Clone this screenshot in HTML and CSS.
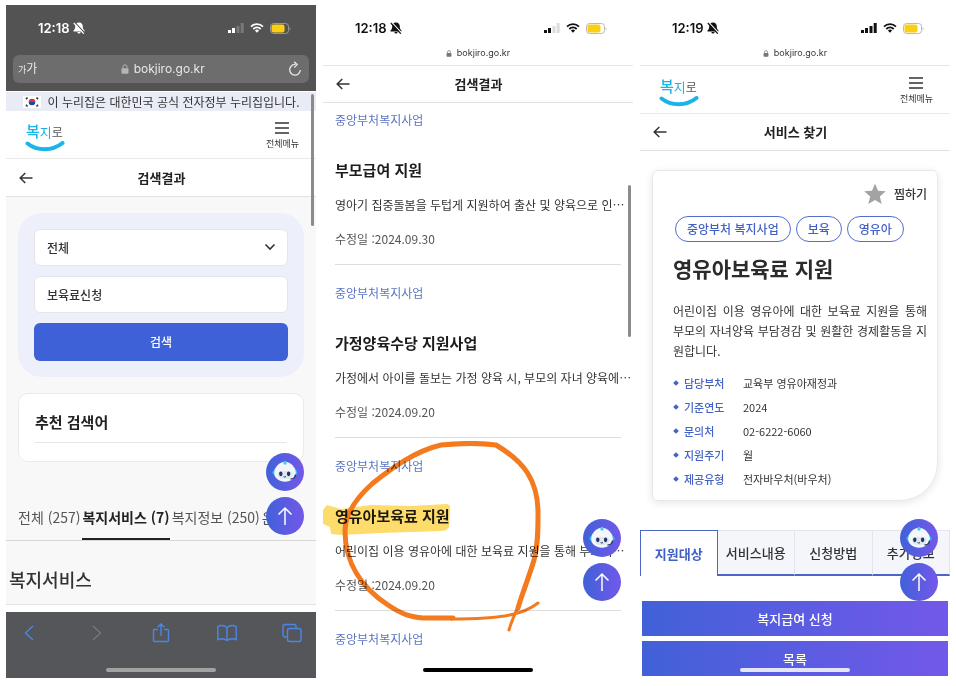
FILE: index.html
```html
<!DOCTYPE html>
<html lang="ko">
<head>
<meta charset="utf-8">
<meta name="viewport" content="width=device-width, initial-scale=1">
<title>복지로 서비스 안내</title>
<link rel="stylesheet" href="styles.css">
</head>
<body>
<svg class="sprite" aria-hidden="true">
  <symbol id="bell" viewBox="0 0 12 12"><path d="M6 .5C3.400.5 2.200 2.300 2.200 4.400c0 2.300-.7 3-1.700 4.200v.8h11v-.8c-1-1.200-1.700-1.900-1.700-4.200C9.800 2.300 8.600.5 6 .5zM4.400 10a1.600 1.600 0 0 0 3.200 0z" fill="currentColor"/><path d="M2 .6 11.600 11" stroke="var(--bar)" stroke-width="1.200"/><path d="M.8 1 10.800 11.700" stroke="currentColor" stroke-width="1.200"/></symbol>
  <symbol id="wifi" viewBox="0 0 14 10"><path d="M1 3.600a8.600 8.600 0 0 1 12 0M3.300 6a5.300 5.300 0 0 1 7.400 0" fill="none" stroke="currentColor" stroke-width="1.800"/><path d="M7 9.800 4.900 7.600a3 3 0 0 1 4.200 0z" fill="currentColor"/></symbol>
  <symbol id="battery" viewBox="0 0 21 11"><rect x=".5" y=".5" width="18" height="10" rx="3" fill="none" stroke="#a9a9a9" stroke-opacity=".8"/><rect x="1.500" y="1.500" width="13" height="8" rx="2" fill="#fccf12"/><path d="M19.700 4v3.500c1-.4 1-3 0-3.500z" fill="#a9a9a9"/></symbol>
  <symbol id="lock" viewBox="0 0 8 10"><rect x=".5" y="4.200" width="7" height="5.500" rx="1" fill="currentColor"/><path d="M2 4.500V2.800a2 2 0 0 1 4 0v1.700" fill="none" stroke="currentColor"/></symbol>
  <symbol id="back" viewBox="0 0 14 12"><path d="M6.300 1 1.200 6l5.100 5M1.500 6H13.500" fill="none" stroke="currentColor" stroke-width="1.500"/></symbol>
  <symbol id="menu" viewBox="0 0 16 12"><path d="M1 1h14M1 6h14M1 11h14" stroke="currentColor" stroke-width="1.300"/></symbol>
  <symbol id="smile" viewBox="0 0 40 11"><path d="M2.500 2.500C12 10 27 10.500 37.500 2" fill="none" stroke="#19b4e9" stroke-width="4" stroke-linecap="round"/></symbol>
  <symbol id="up" viewBox="0 0 38 38"><path d="M19 28V11M12.500 17.500 19 11l6.500 6.500" fill="none" stroke="#fff" stroke-width="1.500"/></symbol>
  <symbol id="bot" viewBox="0 0 38 38"><path d="M10 14 6 19.500 10 25M28 14l4 5.500L28 25" fill="#27b9ee"/><path d="M16 11l3-3.500 3 3.500z" fill="#32c5f2"/><path d="M19 8.800c5.500 0 10.800 5.500 10.800 11.200 0 5-5 8.700-10.800 8.700S8.200 25 8.200 20C8.200 14.300 13.500 8.800 19 8.800z" fill="#f3f7fc"/><circle cx="19" cy="10" r="1.700" fill="#43cdf3"/><path d="M12 20c1-3 13-3 14.500 0 .5 4-2 6-7.300 6S11.500 24 12 20z" fill="#dfe8f2"/><ellipse cx="14.800" cy="20.800" rx="1.700" ry="2.400" fill="#27355c"/><ellipse cx="22.600" cy="20.800" rx="1.700" ry="2.400" fill="#27355c"/><path d="M17.600 23.500q1.200 1.200 2.400 0" fill="none" stroke="#27355c"/><path d="M29.500 21.500q-.5 4.500-5 4.500" fill="none" stroke="#27355c" stroke-width="1.400"/></symbol>
</svg>

<main class="board">
  <section class="phone search" aria-label="검색 화면">
    <header class="chrome">
      <div class="status">
        <span class="time">12:18 <svg class="bell"><use href="#bell"/></svg></span>
        <span class="signals">
          <svg class="bars" viewBox="0 0 16 10"><path d="M0 7h3v3H0zM4 5h3v5H4z" fill="currentColor"/><path d="M8.500 3h3v7h-3zM12.700 0h3v10h-3z" fill="currentColor" opacity=".22"/></svg>
          <svg class="wifi"><use href="#wifi"/></svg><svg class="battery"><use href="#battery"/></svg>
        </span>
      </div>
      <div class="address">
        <span class="zoomer"><small>가</small>가</span>
        <span class="host"><svg><use href="#lock"/></svg>bokjiro.go.kr</span>
        <button class="reload" aria-label="새로고침"><svg viewBox="0 0 14 16"><path d="M7.500 3.500A5.300 5.300 0 1 0 12.300 9M6.200.8 9.200 3.600 6.200 6.600" fill="none" stroke="currentColor" stroke-width="1.300"/></svg></button>
      </div>
    </header>
    <p class="official"><svg viewBox="0 0 18 12"><path d="M0 0h18v12H0z" fill="#fff"/><path d="M5.700 6a3.300 3.300 0 0 1 6.600 0z" fill="#d8323f"/><path d="M5.700 6a3.300 3.300 0 0 0 6.600 0z" fill="#1b4a9c"/><path d="m3 3.300 1.500-1.800M3 8.700l1.500 1.800M15 3.300l-1.500-1.800M15 8.700l-1.500 1.800" stroke="#333" stroke-width="1.600"/></svg>이 누리집은 대한민국 공식 전자정부 누리집입니다.</p>
    <div class="brandbar">
      <a class="logo" href="#"><span><b>복</b>지<i>로</i></span><svg><use href="#smile"/></svg></a>
      <button class="menu"><svg><use href="#menu"/></svg>전체메뉴</button>
    </div>
    <div class="titlebar"><button aria-label="뒤로"><svg><use href="#back"/></svg></button><h1>검색결과</h1></div>
    <div class="results">
      <form class="query">
        <div class="field"><select aria-label="분류"><option>전체</option></select><svg viewBox="0 0 12 8"><path d="m1.500 1.500 4.500 4.500 4.500-4.500" fill="none" stroke="currentColor" stroke-width="1.600"/></svg></div>
        <div class="field"><input type="text" aria-label="검색어" value="보육료신청"></div>
        <button type="button">검색</button>
      </form>
      <section class="suggest"><h2>추천 검색어</h2></section>
      <nav class="counts"><a href="#">전체 (257)</a><a href="#" class="on">복지서비스 (7)</a><a href="#">복지정보 (250)</a><a href="#">온라인</a></nav>
      <h2 class="group">복지서비스</h2>
    </div>
    <footer class="toolbar">
      <div class="tools">
        <button aria-label="이전"><svg viewBox="0 0 20 20"><path d="M13 3 5.500 10 13 17" /></svg></button>
        <button aria-label="다음" disabled><svg viewBox="0 0 20 20"><path d="m7 3 7.500 7L7 17"/></svg></button>
        <button aria-label="공유"><svg viewBox="0 0 20 20"><path d="M7 6.500H3.200q-.7 0-.7.7v10.600q0 .7.700.7h13.600q.7 0 .7-.7V7.200q0-.7-.7-.7H13M10 13V1.200M6.600 4.300 10 1l3.400 3.300"/></svg></button>
        <button aria-label="책갈피"><svg viewBox="0 0 20 20"><path d="M10 4.500Q5.500 1 .8 3.500v13.200Q6 14.500 10 17.500q4-3 9.200-.8V3.500Q14.500 1 10 4.500zv13"/></svg></button>
        <button aria-label="탭"><svg viewBox="0 0 20 20"><rect x="5.500" y="5.500" width="13.500" height="13" rx="2"/><path d="M5.500 14H3q-2 0-2-2V3.500q0-2 2-2h9q2 0 2 2v2"/></svg></button>
      </div>
      <span class="home"></span>
    </footer>
    <span class="thumb"></span>
    <div class="floating"><button aria-label="챗봇"><svg><use href="#bot"/></svg></button><button aria-label="맨 위로"><svg><use href="#up"/></svg></button></div>
  </section>

  <section class="phone list" aria-label="검색결과 화면">
    <header class="chrome light">
      <div class="status">
        <span class="time">12:18 <svg class="bell"><use href="#bell"/></svg></span>
        <span class="signals">
          <svg class="bars" viewBox="0 0 16 10"><path d="M0 7h3v3H0zM4 5h3v5H4z" fill="currentColor"/><path d="M8.500 3h3v7h-3zM12.700 0h3v10h-3z" fill="currentColor" opacity=".15"/></svg>
          <svg class="wifi"><use href="#wifi"/></svg><svg class="battery"><use href="#battery"/></svg>
        </span>
      </div>
      <p class="host"><svg><use href="#lock"/></svg>bokjiro.go.kr</p>
    </header>
    <div class="titlebar"><button aria-label="뒤로"><svg><use href="#back"/></svg></button><h1>검색결과</h1></div>
    <ul class="items">
      <li><p class="kind">중앙부처복지사업</p><h2>부모급여 지원</h2><p>영아기 집중돌봄을 두텁게 지원하여 출산 및 양육으로 인⋯</p><p class="date">수정일 :2024.09.30</p></li>
      <li><p class="kind">중앙부처복지사업</p><h2>가정양육수당 지원사업</h2><p>가정에서 아이를 돌보는 가정 양육 시, 부모의 자녀 양육에⋯</p><p class="date">수정일 :2024.09.20</p></li>
      <li><p class="kind">중앙부처복지사업</p><h2>영유아보육료 지원</h2><p>어린이집 이용 영유아에 대한 보육료 지원을 통해 부모의⋯</p><p class="date">수정일 :2024.09.20</p></li>
      <li><p class="kind">중앙부처복지사업</p></li>
    </ul>
    <svg class="marks" viewBox="0 0 310 673" aria-hidden="true">
      <path class="marker" d="M0 505 4 500l14 4 30-4 40 1 36-2q4 1 3 6l-1 17q-2 4-8 4l-60 2-40 2-10-1-1-7-7-3z"/>
      <path class="pen" d="M195 603C200 586 207 569 211 555C215 540 215 526 215 511C216 475 200 456 173 440C158 438 138 438 118 440C92 446 69 463 50 478C32 494 22 509 22 526C22 558 39 583 65 600C80 610 88 612 100 613L130 613"/>
      <path class="pen fine" d="M208 566C201 592 190 610 186 625M128 614C185 614 202 608 215 598"/>
    </svg>
    <span class="home"></span>
    <span class="thumb"></span>
    <div class="floating"><button aria-label="챗봇"><svg><use href="#bot"/></svg></button><button aria-label="맨 위로"><svg><use href="#up"/></svg></button></div>
  </section>

  <section class="phone detail" aria-label="서비스 상세 화면">
    <header class="chrome light">
      <div class="status">
        <span class="time">12:19 <svg class="bell"><use href="#bell"/></svg></span>
        <span class="signals">
          <svg class="bars" viewBox="0 0 16 10"><path d="M0 7h3v3H0zM4 5h3v5H4zM8.500 3h3v7h-3zM12.700 0h3v10h-3z" fill="currentColor"/></svg>
          <svg class="wifi"><use href="#wifi"/></svg><svg class="battery"><use href="#battery"/></svg>
        </span>
      </div>
      <p class="host"><svg><use href="#lock"/></svg>bokjiro.go.kr</p>
    </header>
    <div class="brandbar">
      <a class="logo" href="#"><span><b>복</b>지<i>로</i></span><svg><use href="#smile"/></svg></a>
      <button class="menu"><svg><use href="#menu"/></svg>전체메뉴</button>
    </div>
    <div class="titlebar"><button aria-label="뒤로"><svg><use href="#back"/></svg></button><h1>서비스 찾기</h1></div>
    <article class="card">
      <button class="save"><svg viewBox="0 0 22 22"><path d="m11 .5 3 7.200 7.800.6-6 5.100 1.900 7.600L11 17l-6.700 4 1.900-7.600-6-5.100 7.800-.6z" fill="#a3a3a3"/></svg>찜하기</button>
      <p class="tags"><span>중앙부처 복지사업</span><span>보육</span><span>영유아</span></p>
      <h2>영유아보육료 지원</h2>
      <p class="summary">어린이집 이용 영유아에 대한 보육료 지원을 통해 부모의 자녀양육 부담경감 및 원활한 경제활동을 지원합니다.</p>
      <dl>
        <dt>담당부처</dt><dd>교육부 영유아재정과</dd>
        <dt>기준연도</dt><dd>2024</dd>
        <dt>문의처</dt><dd>02-6222-6060</dd>
        <dt>지원주기</dt><dd>월</dd>
        <dt>제공유형</dt><dd>전자바우처(바우처)</dd>
      </dl>
    </article>
    <nav class="tabs"><button class="on">지원대상</button><button>서비스내용</button><button>신청방법</button><button>추가정보</button></nav>
    <div class="actions"><button>복지급여 신청</button><button>목록</button></div>
    <span class="home"></span>
    <div class="floating"><button aria-label="챗봇"><svg><use href="#bot"/></svg></button><button aria-label="맨 위로"><svg><use href="#up"/></svg></button></div>
  </section>
</main>
</body>
</html>
```
FILE: styles.css
```css
* { box-sizing: border-box; margin: 0; padding: 0; }
body { background: #fff; color: #333; font: 12px/20px "Noto Sans CJK KR", sans-serif; }
button, input, select { font: inherit; color: inherit; border: 0; background: none; }
a { color: inherit; text-decoration: none; }
svg { display: block; flex: none; }
.sprite { position: absolute; width: 0; height: 0; }

.board { display: grid; grid-template-columns: repeat(3, 1fr); gap: 7px; min-height: 100vh; padding: 5px 6px 8px; }
.phone { position: relative; display: flex; flex-direction: column; min-width: 0; --bar: #fff; }

/* Status bar and address */
.chrome { font-family: Inter, "Noto Sans CJK KR", sans-serif; }
.search .chrome { --bar: #535353; background: #535353; color: #fff; padding: 0 7px 8px; margin-bottom: 1px; }
.status { display: flex; justify-content: space-between; align-items: center; height: 50px; padding: 0 18px 4px 25px; }
.light .status { height: 41px; padding: 5px 26px 0 32px; color: #111; }
.time { display: flex; align-items: center; gap: 3px; font-size: 13px; font-weight: 600; }
.bell { width: 12px; height: 12px; }
.signals { display: flex; align-items: center; gap: 6px; }
.bars { width: 16px; height: 10px; }
.wifi { width: 14px; height: 10px; }
.battery { width: 21px; height: 11px; }
.address { display: flex; justify-content: space-between; align-items: center; height: 28px; padding: 0 7px 0 5px; border-radius: 6px; background: #6d6d6d; color: #e8e8e8; }
.zoomer { font-size: 12px; }
.zoomer small { font-size: 9px; }
.host { display: flex; align-items: center; justify-content: center; gap: 5px; }
.address .host { font-size: 12px; }
.address .host svg { width: 8px; height: 10px; color: #b5b5b5; }
.light .host { height: 14px; font-size: 9px; color: #333; }
.light .host svg { width: 6px; height: 7px; color: #777; }
.light { border-bottom: 1px solid #e5e5e5; height: 61px; }
.reload svg { width: 14px; height: 16px; }

.official { display: flex; align-items: center; justify-content: center; gap: 7px; height: 19px; background: #e9ecf5; }
.official svg { width: 18px; height: 12px; }
.brandbar { display: flex; justify-content: space-between; align-items: center; height: 48px; padding: 3px 17px 0 19px; border-bottom: 1px solid #e9e9e9; }
.logo { display: block; color: #19b4e9; }
.logo span { display: block; height: 20px; padding-left: 1px; font-size: 13px; }
.logo b { font-size: 15px; font-weight: 500; }
.logo i { font-style: normal; color: #555; font-size: 12px; }
.logo svg { width: 40px; height: 11px; }
.menu { display: grid; justify-items: center; gap: 3px; font-size: 9px; line-height: 14px; }
.menu svg { width: 16px; height: 12px; }
.titlebar { display: grid; grid-template-columns: 14px 1fr 14px; align-items: center; height: 38px; padding: 0 12px 0 13px; border-bottom: 1px solid #e2e2e2; }
.titlebar svg { width: 14px; height: 12px; }
.titlebar h1 { font-size: 13px; font-weight: 700; text-align: center; color: #222; }
.list .titlebar, .detail .titlebar { height: 37px; }

/* Search screen */
.results { flex: 1; margin-bottom: 7px; padding: 16px 0 0; border-bottom: 1px solid #e2e2e2; background: #f8f8f8; overflow: hidden; }
.query { display: grid; gap: 10px; margin: 0 12px; padding: 16px; border-radius: 24px; background: #edf0fb; }
.field { position: relative; }
.field select, .field input { display: block; width: 100%; height: 37px; padding: 0 12px; border: 1px solid #e5e6ec; border-radius: 6px; background: #fff; appearance: none; font-weight: 500; }
.field svg { position: absolute; right: 12px; top: 14px; width: 12px; height: 8px; }
.query button { height: 38px; border-radius: 6px; background: #3f61d7; color: #fff; font-weight: 500; }
.suggest { margin: 16px 12px 0; padding: 14px 16px 18px; border: 1px solid #ebebeb; border-radius: 10px; background: #fff; }
.suggest h2 { padding-bottom: 6px; border-bottom: 1px solid #e6e6e6; font-size: 15px; line-height: 28px; font-weight: 700; color: #222; }
.counts { display: flex; gap: 2px; margin-top: 34px; padding-left: 12px; border-bottom: 1px solid #d8d8d8; font-size: 14px; line-height: 42px; white-space: nowrap; overflow: hidden; color: #555; }
.counts .on { border-bottom: 2px solid #222; font-weight: 700; color: #222; }
.group { padding: 25px 3px 12px; font-size: 18px; line-height: 26px; font-weight: 500; }
.toolbar { height: 66px; padding-top: 11px; background: #55565a; }
.tools { display: flex; justify-content: space-between; padding: 0 14px; }
.tools svg { width: 20px; height: 20px; fill: none; stroke: #4a86e8; stroke-width: 1.4; }
.tools :disabled svg { stroke: #77787b; }
.home { position: absolute; left: 50%; bottom: 6px; width: 110px; height: 4px; margin-left: -55px; border-radius: 2px; background: #000; }
.search .home { background: #a2a2a2; }
.detail .home { background: #e4e4fa; }
.thumb { position: absolute; right: 2px; width: 3px; border-radius: 2px; background: #8b8b8b; }
.search .thumb { top: 89px; height: 132px; }
.list .thumb { top: 180px; height: 152px; }
.floating { position: absolute; right: 12px; bottom: 77px; display: grid; gap: 6px; }
.search .floating { bottom: 143px; }
.floating button { width: 38px; height: 38px; border-radius: 50%; background: linear-gradient(90deg, #4161d8, #7358ea); }
.floating svg { width: 38px; height: 38px; }

/* Result list */
.items { flex: 1; padding: 0 12px; list-style: none; }
.items li { padding: 18px 0 15px; border-bottom: 1px solid #dedede; }
.items li:first-child { padding-top: 7px; }
.items li:last-child { border: 0; }
.items p { white-space: nowrap; }
.items .kind { color: #5a74c4; }
.items h2 { margin: 27px 0 12px; font-size: 15px; line-height: 26px; font-weight: 700; color: #1c1c1c; }
.items .date { margin-top: 14px; color: #555; }
.marks { position: absolute; left: 0; top: 0; width: 310px; height: 673px; pointer-events: none; mix-blend-mode: multiply; }
.marker { fill: #fddc6c; }
.pen { fill: none; stroke: #f47a20; stroke-width: 5; stroke-linecap: round; stroke-linejoin: round; }
.fine { stroke-width: 3; }

/* Service detail */
.card { margin: 19px 12px 0; padding: 12px 10px 9px 20px; border: 1px solid #e8e8e8; border-radius: 6px 6px 38px 6px; box-shadow: 0 2px 8px rgba(0, 0, 0, .1); }
.save { display: flex; align-items: center; gap: 8px; margin-left: auto; font-weight: 500; }
.save svg { width: 22px; height: 22px; }
.tags { display: flex; gap: 5px; margin-top: 11px; padding-left: 2px; }
.tags span { padding: 0 11px; border: 1px solid #526fce; border-radius: 13px; line-height: 24px; font-weight: 500; color: #4261c4; }
.card h2 { margin: 10px 0 17px; font-size: 21px; line-height: 32px; font-weight: 700; color: #2b2b2b; }
.summary { text-align: justify; }
.card dl { display: grid; grid-template-columns: 70px 1fr; margin-top: 10px; font-size: 11px; line-height: 24px; }
.card dt { display: flex; align-items: center; gap: 6px; color: #4563c6; font-weight: 500; }
.card dt::before { content: ""; width: 4px; height: 4px; margin-left: 1px; background: currentColor; transform: rotate(45deg); }
.tabs { display: grid; grid-template-columns: repeat(4, 1fr); margin-top: 29px; }
.tabs button { height: 46px; border: 1px solid #e4e5ea; border-width: 1px 1px 2px 0; border-bottom-color: #4a66c8; background: #f5f6fb; font-size: 13px; font-weight: 500; }
.tabs .on { border: 1px solid #4a66c8; border-bottom: 0; background: #fff; color: #3f5fc6; font-weight: 700; }
.actions { display: grid; gap: 5px; padding: 25px 2px 2px; }
.actions button { height: 35px; background: linear-gradient(90deg, #4161d8, #7358ea); color: #fff; font-size: 13px; font-weight: 500; }
```
